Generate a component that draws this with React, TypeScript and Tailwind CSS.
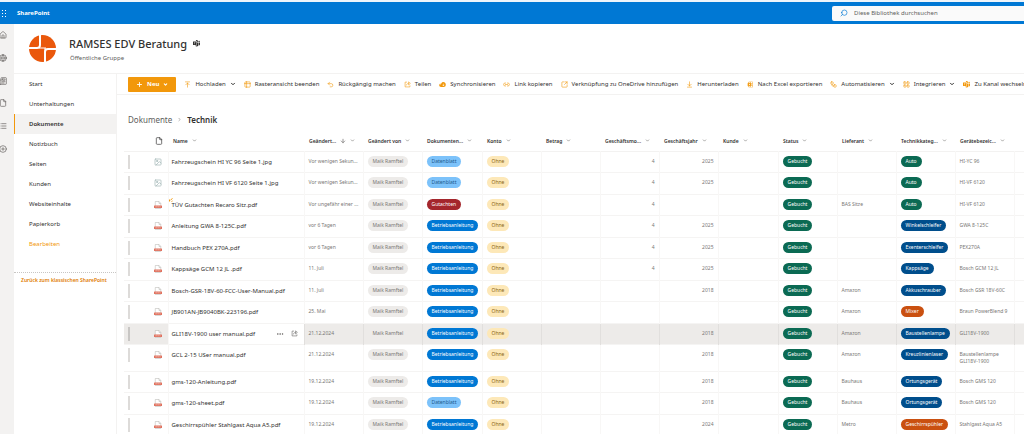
import React, { useState } from 'react';
import {
  ArrowDown, ArrowDownToLine, ArrowUpToLine, ChevronDown, ChevronRight, CirclePlus, File, Globe, House,
  Image, LayoutGrid, Link2, List, Newspaper, Plus, Search, SquareArrowOutUpRight, Table2, Undo2, Workflow,
  Ellipsis,
} from 'lucide-react';
import { BsMicrosoftTeams } from 'react-icons/bs';
import { PiCloudArrowDownFill, PiMicrosoftExcelLogoFill } from 'react-icons/pi';
import clsx from 'clsx';

type Row = {
  name: string;
  modified: string;
  docType: string;
  month?: string;
  year?: string;
  supplier?: string;
  category: string;
  device: string;
  isNew?: boolean;
};

const rows: Row[] = [
  { name: 'Fahrzeugschein HI YC 96 Seite 1.jpg', modified: 'Vor wenigen Sekun...', docType: 'Datenblatt', month: '4', year: '2025', category: 'Auto', device: 'HI-YC 96' },
  { name: 'Fahrzeugschein HI VF 6120 Seite 1.jpg', modified: 'Vor wenigen Sekun...', docType: 'Datenblatt', month: '4', year: '2025', category: 'Auto', device: 'HI-VF 6120' },
  { name: 'TÜV Gutachten Recaro Sitz.pdf', modified: 'Vor ungefähr einer ...', docType: 'Gutachten', month: '4', supplier: 'BAS Sitze', category: 'Auto', device: 'HI-VF 6120', isNew: true },
  { name: 'Anleitung GWA 8-125C.pdf', modified: 'vor 6 Tagen', docType: 'Betriebsanleitung', month: '4', year: '2025', category: 'Winkelschleifer', device: 'GWA 8-125C' },
  { name: 'Handbuch PEX 270A.pdf', modified: 'vor 6 Tagen', docType: 'Betriebsanleitung', month: '4', year: '2025', category: 'Exenterschleifer', device: 'PEX270A' },
  { name: 'Kappsäge GCM 12 JL .pdf', modified: '11. Juli', docType: 'Betriebsanleitung', month: '4', year: '2025', category: 'Kappsäge', device: 'Bosch GCM 12 JL' },
  { name: 'Bosch-GSR-18V-60-FCC-User-Manual.pdf', modified: '11. Juli', docType: 'Betriebsanleitung', year: '2018', supplier: 'Amazon', category: 'Akkuschrauber', device: 'Bosch GSR 18V-60C' },
  { name: 'JB901AN-JB9040BK-223196.pdf', modified: '25. Mai', docType: 'Betriebsanleitung', supplier: 'Amazon', category: 'Mixer', device: 'Braun PowerBlend 9' },
  { name: 'GLI18V-1900 user manual.pdf', modified: '21.12.2024', docType: 'Betriebsanleitung', year: '2018', supplier: 'Amazon', category: 'Baustellenlampe', device: 'GLI18V-1900' },
  { name: 'GCL 2-15 USer manual.pdf', modified: '21.12.2024', docType: 'Betriebsanleitung', year: '2018', supplier: 'Amazon', category: 'Kreuzlinienlaser', device: 'Baustellenlampe GLI18V-1900' },
  { name: 'gms-120-Anleitung.pdf', modified: '19.12.2024', docType: 'Betriebsanleitung', year: '2018', supplier: 'Bauhaus', category: 'Ortungsgerät', device: 'Bosch GMS 120' },
  { name: 'gms-120-sheet.pdf', modified: '19.12.2024', docType: 'Datenblatt', year: '2018', supplier: 'Bauhaus', category: 'Ortungsgerät', device: 'Bosch GMS 120' },
  { name: 'Geschirrspühler Stahlgast Aqua A5.pdf', modified: '19.12.2024', docType: 'Betriebsanleitung', year: '2024', supplier: 'Metro', category: 'Geschirrspühler', device: 'Stahlgast Aqua A5' },
];

const pillColors: Record<string, string> = {
  Datenblatt: 'bg-[#7cc2fa] text-[#1f5a8c]',
  Gutachten: 'bg-[#a4262c] text-white',
  Betriebsanleitung: 'bg-[#0078d4] text-white',
  Auto: 'bg-[#0b6a53] text-white',
  Mixer: 'bg-[#ca5010] text-white',
  Geschirrspühler: 'bg-[#ca5010] text-white',
};

const navItems = ['Start', 'Unterhaltungen', 'Dokumente', 'Notizbuch', 'Seiten', 'Kunden', 'Websiteinhalte', 'Papierkorb'];

const headers = ['Geändert...', 'Geändert von', 'Dokumenten...', 'Konto', 'Betrag', 'Geschäftsmo...', 'Geschäftsjahr', 'Kunde', 'Status', 'Lieferant', 'Technikkateg...', 'Gerätebezeic...'];

function ShareIcon({ size = 7, className }: { size?: number; className?: string }) {
  return (
    <svg viewBox="0 0 16 16" width={size} height={size} fill="none" stroke="currentColor" strokeWidth="1.3" className={className} aria-hidden="true">
      <path d="M7 2.500H2.500v11h11V10" />
      <path d="M5.500 10c.5-3 2.500-4.500 5-4.500M10.500 2v7l4-3.500z" />
    </svg>
  );
}

const commands = [
  { label: 'Hochladen', icon: ArrowUpToLine, menu: true },
  { label: 'Rasteransicht beenden', icon: Table2 },
  { label: 'Rückgängig machen', icon: Undo2 },
  { label: 'Teilen', icon: ShareIcon },
  { label: 'Synchronisieren', icon: PiCloudArrowDownFill },
  { label: 'Link kopieren', icon: Link2 },
  { label: 'Verknüpfung zu OneDrive hinzufügen', icon: SquareArrowOutUpRight },
  { label: 'Herunterladen', icon: ArrowDownToLine },
  { label: 'Nach Excel exportieren', icon: PiMicrosoftExcelLogoFill },
  { label: 'Automatisieren', icon: Workflow, menu: true },
  { label: 'Integrieren', icon: LayoutGrid, menu: true },
  { label: 'Zu Kanal wechseln', icon: BsMicrosoftTeams },
];

const railItems = [
  { label: 'Startseite', icon: House },
  { label: 'Meine Websites', icon: Globe },
  { label: 'Meine Neuigkeiten', icon: Newspaper },
  { label: 'Meine Dateien', icon: File },
  { label: 'Meine Listen', icon: List },
  { label: 'Erstellen', icon: CirclePlus },
];

function Pill({ children, className }: { children: React.ReactNode; className: string }) {
  return (
    <span className={clsx('inline-block h-[11px] rounded-full px-[5px] text-[5px] leading-[11px] whitespace-nowrap align-top', className)}>
      {children}
    </span>
  );
}

function GroupLogo() {
  return (
    <svg viewBox="0 0 54 54" className="size-[27px]" aria-hidden="true">
      <circle cx="27" cy="27" r="27" fill="#ea580c" />
      <path d="M22 0v20q0 6-6 6H0M54 28H38q-6 0-6 6v20" fill="none" stroke="#fff" strokeWidth="4" />
      <path d="M20 26h14M32 36V26" fill="none" stroke="#fff" strokeWidth="2" />
    </svg>
  );
}

function WaffleIcon() {
  return (
    <svg viewBox="0 0 7 7" className="size-[7px]" fill="currentColor" aria-hidden="true">
      {[0, 3, 6].map((y) => [0, 3, 6].map((x) => <rect key={`${x}${y}`} x={x} y={y} width="1" height="1" />))}
    </svg>
  );
}

function PdfIcon() {
  return (
    <svg viewBox="0 0 16 16" className="size-[8px]" aria-hidden="true">
      <path d="M2.500 1h7.500l3.500 3.500V15h-11z" fill="#fff" stroke="#b3b0ad" />
      <path d="M10 1v4h3.500" fill="none" stroke="#b3b0ad" />
      <rect x="0" y="9" width="16" height="5" rx="1" fill="#e0705d" />
      <path d="M3 11.500h2.500M7 11.500h2.500M11 11.500h2" fill="none" stroke="#fff" />
    </svg>
  );
}

export default function App() {
  const [activeNav, setActiveNav] = useState('Dokumente');
  const [query, setQuery] = useState('');
  const hovered = 'GLI18V-1900 user manual.pdf';

  return (
    <div className="flex min-h-screen flex-col overflow-x-hidden bg-white font-['Noto_Sans','Open_Sans',sans-serif] text-[6px] leading-[8px] text-[#323130]">
      {/* Suite bar */}
      <header className="flex h-6 shrink-0 items-center border-t-2 border-[#eef5fb] bg-[#0078d4]">
        <button aria-label="App-Startfeld" className="-ml-px text-white">
          <WaffleIcon />
        </button>
        <span className="ml-[11px] text-[6px] font-bold text-white">SharePoint</span>
        <label className="ml-auto flex h-[15px] w-48 items-center gap-[6px] rounded-l-xs bg-[#fafafa] pl-2">
          <Search size={8} className="-scale-x-100 text-[#0078d4]" />
          <input
            value={query}
            onChange={(e) => setQuery(e.target.value)}
            placeholder="Diese Bibliothek durchsuchen"
            aria-label="Diese Bibliothek durchsuchen"
            className="min-w-0 flex-1 bg-transparent outline-none placeholder:text-[#605e5c]"
          />
        </label>
      </header>

      <div className="flex flex-1">
        {/* App rail */}
        <div className="w-[14px] shrink-0 overflow-hidden bg-[#f3f2f1]">
          <div className="grid h-[136px] grid-rows-6 items-center">
            {railItems.map(({ label, icon: Icon }) => (
              <button key={label} aria-label={label} className="-ml-px text-[#605e5c]">
                <Icon size={8} />
              </button>
            ))}
          </div>
        </div>

        <div className="flex min-w-0 flex-1 flex-col">
          {/* Site header */}
          <div className="flex h-[49px] shrink-0 items-center gap-[13px] pl-[15px]">
            <GroupLogo />
            <div className="flex flex-col gap-[2px]">
              <h1 className="flex items-center gap-[6px] text-[11px] leading-[16px] font-medium">
                RAMSES EDV Beratung
                <BsMicrosoftTeams size={7} />
              </h1>
              <p className="pl-px text-[6px] text-[#605e5c]">Öffentliche Gruppe</p>
            </div>
          </div>

          <div className="flex flex-1">
            <nav className="w-[103px] shrink-0 border-t border-r border-[#f3f2f1]">
              {navItems.map((item) => (
                <a
                  key={item}
                  href="#"
                  onClick={() => setActiveNav(item)}
                  className={clsx(
                    'flex h-5 items-center border-l pl-[14px]',
                    item === activeNav ? 'border-[#f2980b] bg-[#f3f2f1] font-semibold' : 'border-transparent',
                  )}
                >
                  {item}
                </a>
              ))}
              <a href="#" className="flex h-5 items-center pl-[15px] text-[#f2980b]">Bearbeiten</a>
              <div className="mt-[18px] border-t border-dotted border-[#c8c6c4] pt-[3px] pl-[7px]">
                <a href="#" className="text-[5px] font-semibold text-[#e07b00]">Zurück zum klassischen SharePoint</a>
              </div>
            </nav>

            <main className="min-w-0 flex-1 overflow-hidden">
              {/* Command bar */}
              <div className="flex h-[22px] items-center gap-[8px] overflow-hidden border-y border-[#f3f2f1] pl-[11px] whitespace-nowrap">
                <button className="flex h-[15px] shrink-0 items-center gap-[4px] rounded-[1px] bg-[#f2980b] px-[8px] font-bold text-white">
                  <Plus size={7} strokeWidth={3} />
                  Neu
                  <ChevronDown size={5} strokeWidth={5} />
                </button>
                {commands.map(({ label, icon: Icon, menu }) => (
                  <button key={label} className="flex shrink-0 items-center gap-[4px]">
                    <Icon size={7} className="text-[#f2980b]" />
                    {label}
                    {menu && <ChevronDown size={6} strokeWidth={4} />}
                  </button>
                ))}
              </div>

              {/* Breadcrumb */}
              <div className="flex h-9 items-end gap-[5px] pb-[5px] pl-[11px] text-[8px] leading-[12px]">
                <a href="#" className="text-[#605e5c]">Dokumente</a>
                <ChevronRight size={5} strokeWidth={3} className="mb-[4px] text-[#8a8886]" />
                <span className="font-semibold">Technik</span>
              </div>

              <div className="pl-[7px]">
                <table className="w-full table-fixed border-collapse">
                  <colgroup>
                    <col className="w-[44px]" />
                    <col className="w-[136px]" />
                    <col className="w-[59px]" />
                    <col className="w-[59px]" />
                    <col className="w-[60px]" />
                    <col className="w-[59px]" />
                    <col className="w-[59px]" />
                    <col className="w-[59px]" />
                    <col className="w-[59px]" />
                    <col className="w-[60px]" />
                    <col className="w-[59px]" />
                    <col className="w-[59px]" />
                    <col className="w-[59px]" />
                    <col className="w-[59px]" />
                    <col />
                  </colgroup>
                  <thead>
                    <tr className="h-5 border-b border-[#f3f2f1] text-left text-[5px]">
                      <th className="pl-[31px]"><File size={8} aria-label="Dateityp" /></th>
                      <th className="pl-[5px] font-semibold">
                        <span className="flex items-center gap-[4px]">Name <ChevronDown size={5} strokeWidth={3} className="text-[#797775]" /></span>
                      </th>
                      {headers.map((h, i) => (
                        <th key={h} className="pl-[5px] font-semibold whitespace-nowrap">
                          <span className="flex items-center gap-[4px]">
                            {h}
                            {i === 0 && <ArrowDown size={6} strokeWidth={3} className="shrink-0 text-[#797775]" />}
                            <ChevronDown size={5} strokeWidth={3} className="shrink-0 text-[#797775]" />
                          </span>
                        </th>
                      ))}
                      <th />
                    </tr>
                  </thead>
                  <tbody>
                    {rows.map((row) => {
                      const isHovered = row.name === hovered;
                      const cell = clsx('border-l px-[4px] pt-[4px] align-top text-[5px] text-[#797775]', isHovered ? 'border-[#e1dfdd]' : 'border-[#f8f7f6]');
                      return (
                        <tr
                          key={row.name}
                          className={clsx(
                            'border-b border-[#f5f4f3]',
                            row.device.length > 20 ? 'h-[27px]' : 'h-[21px] even:h-[22px]',
                            isHovered && 'bg-[#edebe9]',
                          )}
                        >
                          <td className="pt-[3px] pl-[4px] align-top">
                            <div className="flex items-center gap-[24px]">
                              <span className={clsx('h-[14px] w-[2px]', isHovered ? 'bg-[#c8c6c4]' : 'bg-[#dddbd9]')} />
                              {row.name.endsWith('.jpg') ? <Image size={8} className="text-[#9fb3b3]" /> : <PdfIcon />}
                            </div>
                          </td>
                          <td className="border-l border-[#f8f7f6] bg-white pt-[6px] pr-[6px] pl-[3px] align-top">
                            <div className="relative flex items-center">
                              {row.isNew && (
                                <svg viewBox="0 0 8 8" className="absolute -top-[3px] -left-[3px] size-[4px]" stroke="#f2980b" strokeWidth="2" fill="none" aria-hidden="true">
                                  <path d="M1 7V3M3 4l4-3M5 7l2-1" />
                                </svg>
                              )}
                              <a href="#" className="whitespace-nowrap">{row.name}</a>
                              {isHovered && (
                                <span className="ml-auto flex gap-[7px] text-[#605e5c]">
                                  <button aria-label="Weitere Aktionen"><Ellipsis size={8} /></button>
                                  <button aria-label="Teilen"><ShareIcon /></button>
                                </span>
                              )}
                            </div>
                          </td>
                          <td className={clsx(cell, 'leading-[11px] whitespace-nowrap')}>{row.modified}</td>
                          <td className={cell}><Pill className="bg-[#edebe9] text-[#797775]">Maik Ramftel</Pill></td>
                          <td className={cell}><Pill className={pillColors[row.docType]}>{row.docType}</Pill></td>
                          <td className={cell}><Pill className="bg-[#fde8b8] text-[#8a6414]">Ohne</Pill></td>
                          <td className={cell} />
                          <td className={clsx(cell, 'text-right leading-[11px]')}>{row.month}</td>
                          <td className={clsx(cell, 'text-right leading-[11px]')}>{row.year}</td>
                          <td className={cell} />
                          <td className={cell}><Pill className="bg-[#0b6a53] text-white">Gebucht</Pill></td>
                          <td className={clsx(cell, 'leading-[11px]')}>{row.supplier}</td>
                          <td className={cell}><Pill className={pillColors[row.category] ?? 'bg-[#004e8c] text-white'}>{row.category}</Pill></td>
                          <td className={cell}><div className="pt-[2px] leading-[7px]">{row.device}</div></td>
                          <td className={cell} />
                        </tr>
                      );
                    })}
                  </tbody>
                </table>
              </div>
            </main>
          </div>
        </div>
      </div>
    </div>
  );
}
